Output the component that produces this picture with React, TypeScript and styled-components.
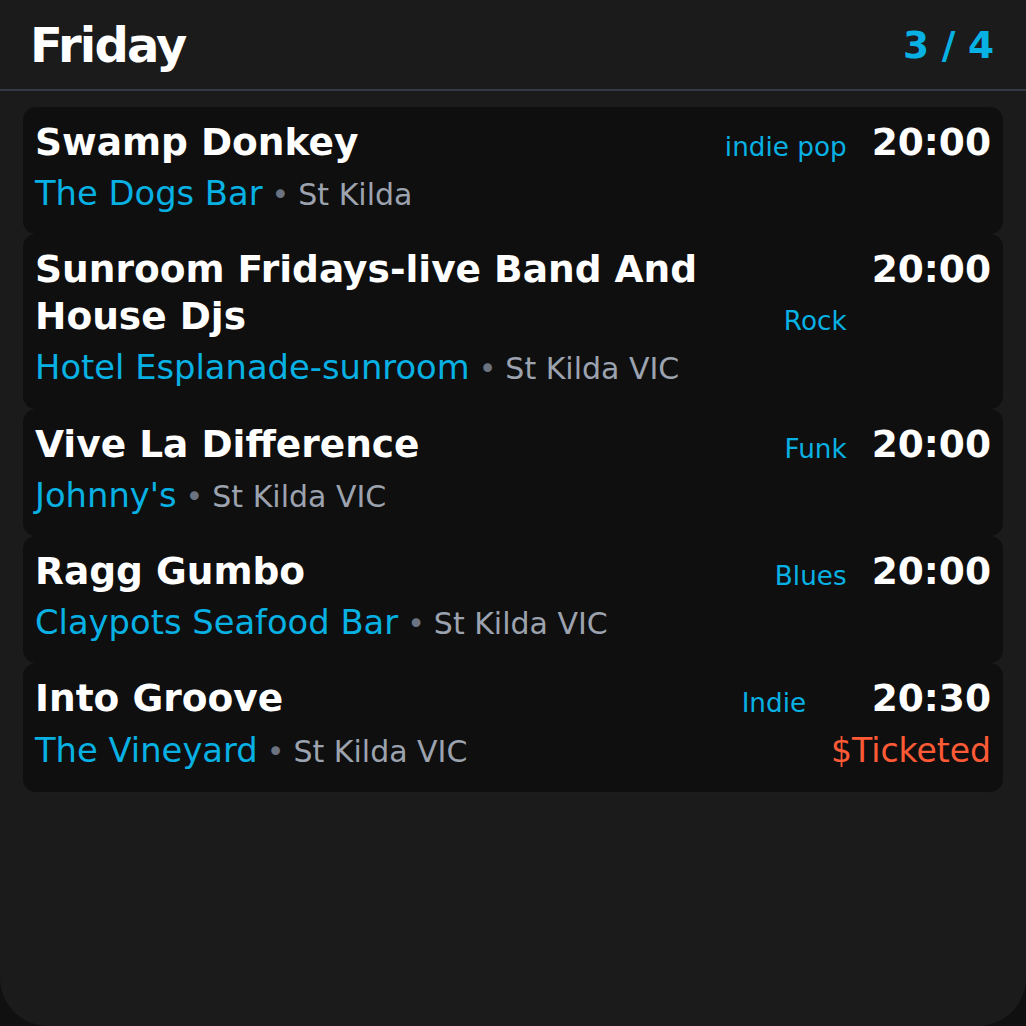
import React from 'react'
import styled, { createGlobalStyle } from 'styled-components'

const data = {
  day: 'Friday',
  page: '3 / 4',
  gigs: [
    { title: 'Swamp Donkey', venue: 'The Dogs Bar', suburb: 'St Kilda', genre: 'indie pop', time: '20:00' },
    {
      title: 'Sunroom Fridays-live Band And House Djs',
      venue: 'Hotel Esplanade-sunroom',
      suburb: 'St Kilda VIC',
      genre: 'Rock',
      time: '20:00',
    },
    { title: 'Vive La Difference', venue: "Johnny's", suburb: 'St Kilda VIC', genre: 'Funk', time: '20:00' },
    { title: 'Ragg Gumbo', venue: 'Claypots Seafood Bar', suburb: 'St Kilda VIC', genre: 'Blues', time: '20:00' },
    {
      title: 'Into Groove',
      venue: 'The Vineyard',
      suburb: 'St Kilda VIC',
      genre: 'Indie',
      time: '20:30',
      price: '$Ticketed',
    },
  ],
}

const GlobalStyle = createGlobalStyle`
  html, body {
    margin: 0;
    padding: 0;
    background-color: #101010;
  }
  * {
    box-sizing: border-box;
  }
`

const App: React.FC = () => {
  return (
    <>
      <GlobalStyle />
      <Screen>
        <Header>
          <Day>{data.day}</Day>
          <PageCount>{data.page}</PageCount>
        </Header>
        <List>
          {data.gigs.map((gig) => (
            <Card key={gig.title}>
              <Title>{gig.title}</Title>
              <Genre>{gig.genre}</Genre>
              <Time>{gig.time}</Time>
              <VenueLine $tall={!!gig.price}>
                <Venue>{gig.venue}</Venue>
                <Dot>•</Dot>
                <Suburb>{gig.suburb}</Suburb>
              </VenueLine>
              {gig.price && <Price>{gig.price}</Price>}
            </Card>
          ))}
        </List>
      </Screen>
    </>
  )
}

const Screen = styled.div`
  height: 1026px;
  background-color: #1b1b1b;
  border-radius: 0 0 48px 48px;
  font-family: 'DejaVu Sans', 'Liberation Sans', sans-serif;
  overflow: hidden;
`

const Header = styled.div`
  display: flex;
  align-items: center;
  justify-content: space-between;
  height: 91px;
  padding: 0 32px 0 30px;
  border-bottom: 2px solid #343a45;
`

const Day = styled.div`
  font-size: 48px;
  font-weight: bold;
  letter-spacing: -1.8px;
  color: #ffffff;
`

const PageCount = styled.div`
  font-size: 37.5px;
  font-weight: bold;
  letter-spacing: -0.2px;
  color: #08b1e3;
`

const List = styled.div`
  display: flex;
  flex-direction: column;
  padding: 16px 23px;
`

const Card = styled.div`
  display: grid;
  grid-template-columns: 1fr auto auto;
  column-gap: 25px;
  row-gap: 2px;
  padding: 12px 12px 13px;
  background-color: #0f0f0f;
  border-radius: 13px;
  box-shadow: 0 8px 22px rgba(255, 255, 255, 0.012);
`

const Title = styled.div`
  grid-column: 1;
  grid-row: 1;
  align-self: last baseline;
  font-size: 37.5px;
  line-height: 1.25;
  font-weight: bold;
  color: #ffffff;
`

const Genre = styled.div`
  grid-column: 2;
  grid-row: 1;
  align-self: last baseline;
  font-size: 26.25px;
  line-height: 1.25;
  color: #08b1e3;
  transform: translateY(1px);
`

const Time = styled.div`
  grid-column: 3;
  grid-row: 1;
  align-self: start;
  justify-self: end;
  font-size: 37.5px;
  line-height: 1.25;
  font-weight: bold;
  color: #ffffff;
`

const VenueLine = styled.div<{ $tall?: boolean }>`
  grid-column: 1 / span 2;
  grid-row: 2;
  display: flex;
  align-items: baseline;
  line-height: ${(p) => (p.$tall ? '54px' : '52.5px')};
  white-space: nowrap;
`

const Venue = styled.span`
  font-size: 33.75px;
  color: #08b1e3;
`

const Dot = styled.span`
  font-size: 30px;
  color: #6b7280;
  margin: 0 9px;
`

const Suburb = styled.span`
  font-size: 30px;
  color: #9ca3af;
`

const Price = styled.div`
  grid-column: 3;
  grid-row: 2;
  justify-self: end;
  font-size: 33px;
  line-height: 54px;
  color: #ff5a36;
`

export default App
